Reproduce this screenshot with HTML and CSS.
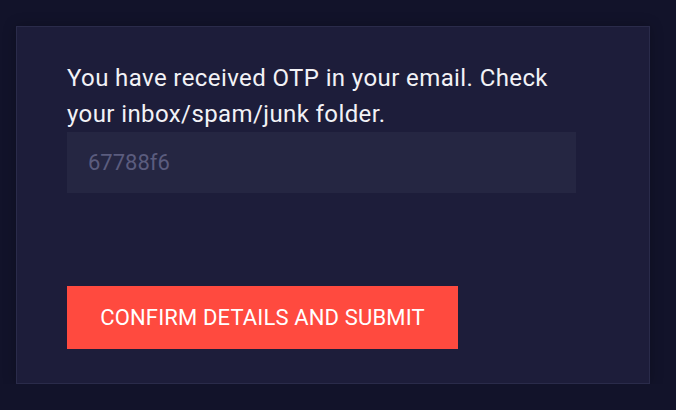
FILE: index.html
```html
<!DOCTYPE html>
<html>
<head>
<meta charset="utf-8">
<link rel="stylesheet" href="styles.css">
</head>
<body>
<div class="card">
  <p class="msg">You have received OTP in your email. Check your inbox/spam/junk folder.</p>
  <input class="otp" type="text" placeholder="67788f6">
  <button class="submit">CONFIRM DETAILS AND SUBMIT</button>
</div>
</body>
</html>
```
FILE: styles.css
```css
html, body {
  margin: 0;
  padding: 0;
  background: #12132a;
}
body {
  padding: 26px 26px 0 16px;
  font-family: Roboto, "Liberation Sans", sans-serif;
}
.card {
  background: #1d1d3a;
  border: 1px solid #2a2b4a;
  box-shadow: 0 0 12px rgba(0,0,0,0.25);
  padding: 33px 50px 34px 50px;
  display: flex;
  flex-direction: column;
  align-items: flex-start;
}
.msg {
  margin: 0;
  color: #f2f2f6;
  font-size: 24px;
  line-height: 36px;
  letter-spacing: 0.4px;
  width: 509px;
}
.otp {
  box-sizing: border-box;
  width: 509px;
  height: 61px;
  border: none;
  outline: none;
  background: #252642;
  padding: 0 21px;
  font-family: Roboto, "Liberation Sans", sans-serif;
  font-size: 22px;
  color: #f2f2f6;
  margin: 0;
}
.otp::placeholder {
  color: #5b5c7e;
}
.submit {
  margin-top: 93px;
  width: 391px;
  height: 63px;
  border: none;
  background: #ff4a3f;
  color: #ffffff;
  font-family: Roboto, "Liberation Sans", sans-serif;
  font-size: 22px;
  letter-spacing: 0.15px;
  padding: 0;
  cursor: pointer;
}
```
